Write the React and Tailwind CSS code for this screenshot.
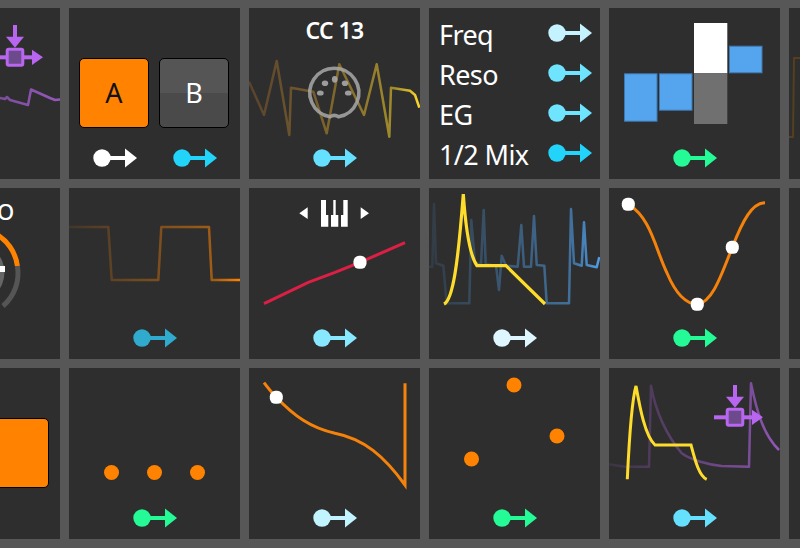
import { useId } from "react"

function Port({ color }) {
  return (
    <svg width="44" height="20" viewBox="0 0 44 20" className="shrink-0">
      <rect x="9" y="8" width="26" height="4" fill={color} />
      <circle cx="9" cy="10" r="8.7" fill={color} />
      <polygon points="32,0.5 44,10 32,19.5" fill={color} />
    </svg>
  )
}

function ModIcon() {
  return (
    <svg width="49" height="42" viewBox="0 0 49 42" className="absolute left-[105px] top-[17px]">
      <rect x="19" y="0" width="4" height="13" fill="#b866f0" />
      <polygon points="12,11.7 30,11.7 21,22.7" fill="#b866f0" />
      <rect x="0" y="30.3" width="12" height="4" fill="#b866f0" />
      <rect x="30" y="30.3" width="10" height="4" fill="#b866f0" />
      <polygon points="38,24.7 49,32.3 38,40" fill="#b866f0" />
      <rect x="13.2" y="24.2" width="15.6" height="16" rx="1.5" fill="#6d4a8c" stroke="#b866f0" strokeWidth="3" />
    </svg>
  )
}

// polyline or path that fades in from the left of the tile, only the last bit is at full colour
function Wave({ points, d, color, startColor, from = 0.15, mid = 0.5, to = 1, width = 2.5 }) {
  const id = useId()
  const common = { fill: "none", stroke: `url(#${id})`, strokeWidth: width, strokeLinejoin: "round" }
  return (
    <>
      <defs>
        <linearGradient id={id} gradientUnits="userSpaceOnUse" x1="0" y1="0" x2="171" y2="0">
          <stop offset="0" stopColor={startColor || color} stopOpacity={from} />
          <stop offset="0.85" stopColor={color} stopOpacity={mid} />
          <stop offset="1" stopColor={color} stopOpacity={to} />
        </linearGradient>
      </defs>
      {points ? <polyline points={points} {...common} /> : <path d={d} {...common} />}
    </>
  )
}

function Handle({ x, y }) {
  return <rect x={x - 6.5} y={y - 6.5} width="13" height="13" rx="5.5" fill="#fff" />
}

function Art({ children }) {
  return (
    <svg width="171" height="136" viewBox="0 0 171 136" className="absolute left-0 top-0">
      {children}
    </svg>
  )
}

function Tile({ port, children, footer }) {
  return (
    <div className="relative h-[171px] w-[171px] bg-[#2e2e2e]">
      <div className="h-[136px]">{children}</div>
      {footer || (
        <div className="flex h-[28px] justify-center">
          <div className="flex items-center">
            <Port color={port} />
          </div>
        </div>
      )}
    </div>
  )
}

const rows = [
  ["Freq", "#c4f2ff"],
  ["Reso", "#6ee4ff"],
  ["EG", "#6ee4ff"],
  ["1/2 Mix", "#22d3fa"],
]

const seqBars = [
  { x: 15, y: 65.3, h: 48.4, fill: "#55a4ee", edge: "#3f78b0" },
  { x: 50, y: 65.3, h: 37.4, fill: "#55a4ee", edge: "#3f78b0" },
  { x: 120, y: 37.7, h: 27.6, fill: "#55a4ee", edge: "#3f78b0" },
]

export default function App() {
  return (
    <div className="h-[548px] w-[800px] overflow-hidden bg-[#575757] pt-2 font-['Noto_Sans',sans-serif]">
      <div className="-ml-[111px] grid w-[1100px] grid-cols-[repeat(6,171px)] gap-[9px]">
        {/* row 1 */}
        <Tile port="#66e0ff">
          <Art>
            <Wave points="60,86 90,92 111,90 116,91 118,89 121,92 139,97 142,81.5 161,90 166,92 171,91.5" color="#a860d8" from={0.2} mid={0.75} to={0.85} />
          </Art>
          <ModIcon />
        </Tile>

        <Tile
          footer={
            <div className="flex h-[28px] items-center gap-[36px] pl-[24px]">
              <Port color="#ffffff" />
              <Port color="#22d3fa" />
            </div>
          }
        >
          <div className="flex gap-[10px] pl-[10px] pt-[50px]">
            <div className="flex h-[70px] w-[70px] items-center justify-center rounded-[5px] border border-black bg-[#ff8300] text-[27px] text-[#111]">
              A
            </div>
            <div className="flex h-[70px] w-[70px] items-center justify-center rounded-[5px] border border-black bg-[linear-gradient(#555555_50%,#4a4a4a_50%)] text-[27px] text-white">
              B
            </div>
          </div>
        </Tile>

        <Tile port="#66e0ff">
          <Art>
            <Wave
              points="0,73.7 15,107 27.7,53 40.3,127 42,79.7 64.3,83.7 77.7,125.3 90.3,56.3 115,107 127.7,56.3 140.3,128.7 142,79.7 161,82.7 166,87 170.3,99.7"
              color="#ffd92a"
              startColor="#c8792a"
              from={0.28}
              mid={0.55}
            />
            <path
              d="M81 108.8 A24.5 24.5 0 1 1 89.6 108.8 Q85.3 106 81 108.8 Z"
              fill="none"
              stroke="#a8a8a8"
              strokeOpacity="0.85"
              strokeWidth="3.6"
            />
            <g fill="#a8a8a8" fillOpacity="0.9">
              <ellipse cx="76" cy="75.3" rx="3.2" ry="2.8" />
              <ellipse cx="85.7" cy="71.3" rx="2.8" ry="3.4" />
              <ellipse cx="96" cy="75.3" rx="3.2" ry="2.8" />
              <ellipse cx="71.3" cy="85" rx="3.4" ry="2.6" />
              <ellipse cx="99.3" cy="85" rx="3.4" ry="2.6" />
            </g>
          </Art>
          <div className="relative pt-[7px] text-center text-[23px] font-semibold leading-[30px] tracking-[-0.6px] text-white">CC 13</div>
        </Tile>

        <div className="flex h-[171px] w-[171px] flex-col bg-[#2e2e2e] pb-[6px] pl-[10px] pr-[8px] pt-[5px]">
          {rows.map(([label, color]) => (
            <div key={label} className="flex h-[40px] items-center justify-between text-[27px] leading-none tracking-[-0.6px] text-white">
              <span className="pt-[2px]">{label}</span>
              <Port color={color} />
            </div>
          ))}
        </div>

        <Tile port="#24fa95">
          <Art>
            {seqBars.map((b) => (
              <rect key={b.x} x={b.x + 0.5} y={b.y + 0.5} width="32.5" height={b.h - 1} fill={b.fill} stroke={b.edge} />
            ))}
            <rect x="85" y="15" width="33.3" height="50.3" fill="#ffffff" />
            <rect x="85" y="65.3" width="33.3" height="50.7" fill="#707070" />
          </Art>
        </Tile>

        <Tile port="#24fa95">
          <Art>
            <polyline points="0,129 4,129 5,50 60,50" fill="none" stroke="#54401f" strokeWidth="2" />
          </Art>
        </Tile>

        {/* row 2 */}
        <Tile port="#66e0ff">
          <Art>
            <path d="M128.4 78 A43 43 0 0 1 114 118" fill="none" stroke="#555555" strokeWidth="5" />
            <path d="M60 49 A43 43 0 0 1 128.4 78" fill="none" stroke="#ff8300" strokeWidth="5" />
            <circle cx="85.5" cy="84.5" r="30" fill="#666666" />
            <rect x="100" y="78" width="16" height="6" fill="#ffffff" />
          </Art>
          <div className="relative pt-[8px] text-center text-[22px] font-medium leading-[30px] text-white">MACRO</div>
        </Tile>

        <Tile port="#30abcd">
          <Art>
            <Wave points="0,39 39.3,39 42.7,92 89.3,92 92.3,39 140,39 142.7,92 171,92" color="#ff8300" from={0.1} mid={0.55} />
          </Art>
        </Tile>

        <Tile port="#88e8ff">
          <Art>
            <g fill="#ffffff">
              <polygon points="50.3,25.3 58.7,19.3 58.7,31" />
              <polygon points="111.7,19.3 111.7,31 120,25.3" />
              <path d="M72 12h5v15h2.3v11.7H72z" />
              <path d="M84.3 12h2.4v15h2.6v11.7H82V27h2.3z" />
              <path d="M94.3 12h4.4v26.7H92V27h2.3z" />
            </g>
            <polyline points="15,115.7 59.3,94.3 86,84.3 111,74.3 156,54.7" fill="none" stroke="#dc1f44" strokeWidth="3" />
            <Handle x={111} y={74.3} />
          </Art>
        </Tile>

        <Tile port="#ddf6ff">
          <Art>
            <Wave
              points="0,78.7 3.3,78.7 5,16 7,75.3 14.3,77.7 17.7,115.3 40.3,115.3 42.3,32 46,75.3 52,76.3 54.7,22 56.7,76.3 67,77.7 70,102 72.7,67.7 77,77.7 88.7,78.7 92.3,37 95,78.7 102,78.7 105,28 107.7,77 115.3,77.7 117.7,115.3 140,115.3 142,21 145,75.3 152.7,77.7 155,34.3 157.7,77 167.7,79.3 170.3,69"
              color="#4f9ee8"
              from={0.12}
              mid={0.6}
            />
            <path d="M15 116 C24 112 29 75 34.3 6 C37 45 41 68 48 77.7 L77 77.7 L116 116" fill="none" stroke="#fedc2c" strokeWidth="3.2" />
          </Art>
        </Tile>

        <Tile port="#24fa95">
          <Art>
            <path
              d="M19.3 16.3 C42 30 46 60 58 85 C66 104 76 116 88.3 116.3 C104 114 113 85 123.3 59.3 C134 32 143 15 156 14.7"
              fill="none"
              stroke="#f5820a"
              strokeWidth="3"
            />
            <Handle x={19.3} y={16.3} />
            <Handle x={88.3} y={116.3} />
            <Handle x={123.3} y={59.3} />
          </Art>
        </Tile>

        <Tile port="#24fa95" />

        {/* row 3 */}
        <Tile port="#66e0ff">
          <div className="flex justify-start pl-[11px] pt-[50px]">
            <div className="h-[70px] w-[149px] rounded-[5px] border border-black bg-[#ff8300]" />
          </div>
        </Tile>

        <Tile port="#24fa95">
          <div className="flex justify-center gap-[28px] pt-[97px]">
            <div className="h-[15px] w-[15px] rounded-full bg-[#ff8300]" />
            <div className="h-[15px] w-[15px] rounded-full bg-[#ff8300]" />
            <div className="h-[15px] w-[15px] rounded-full bg-[#ff8300]" />
          </div>
        </Tile>

        <Tile port="#c2f4ff">
          <Art>
            <path
              d="M15 14.7 C22 24 27 29 27.3 29.3 C45 48 62 60 86 65.3 C115 71 135 88 156 117 V15.3"
              fill="none"
              stroke="#f5820a"
              strokeWidth="3"
            />
            <Handle x={27.3} y={29.3} />
          </Art>
        </Tile>

        <Tile port="#24fa95">
          <Art>
            <circle cx="85" cy="17" r="7.5" fill="#ff8300" />
            <circle cx="128" cy="68" r="7.5" fill="#ff8300" />
            <circle cx="42.5" cy="91" r="7.5" fill="#ff8300" />
          </Art>
        </Tile>

        <Tile port="#66e0ff">
          <Art>
            <Wave
              d="M0 96.3 L16 98.7 L40 98.7 L42 17.7 C46 40 56 65 72.7 85.3 C82 92 100 97 112.7 98 L140 98.7 L142 15.3 C147.7 43.7 155 68 170 82"
              color="#a860d8"
              from={0.12}
              mid={0.65}
              to={0.85}
            />
            <path
              d="M18.3 111.3 C20 75 22 35 27 18 C31 40 36 68 46 77 L82 77 C86 92 90 108 97.7 111.3"
              fill="none"
              stroke="#fedc2c"
              strokeWidth="3"
            />
          </Art>
          <ModIcon />
        </Tile>

        <Tile port="#24fa95" />
      </div>
    </div>
  )
}
